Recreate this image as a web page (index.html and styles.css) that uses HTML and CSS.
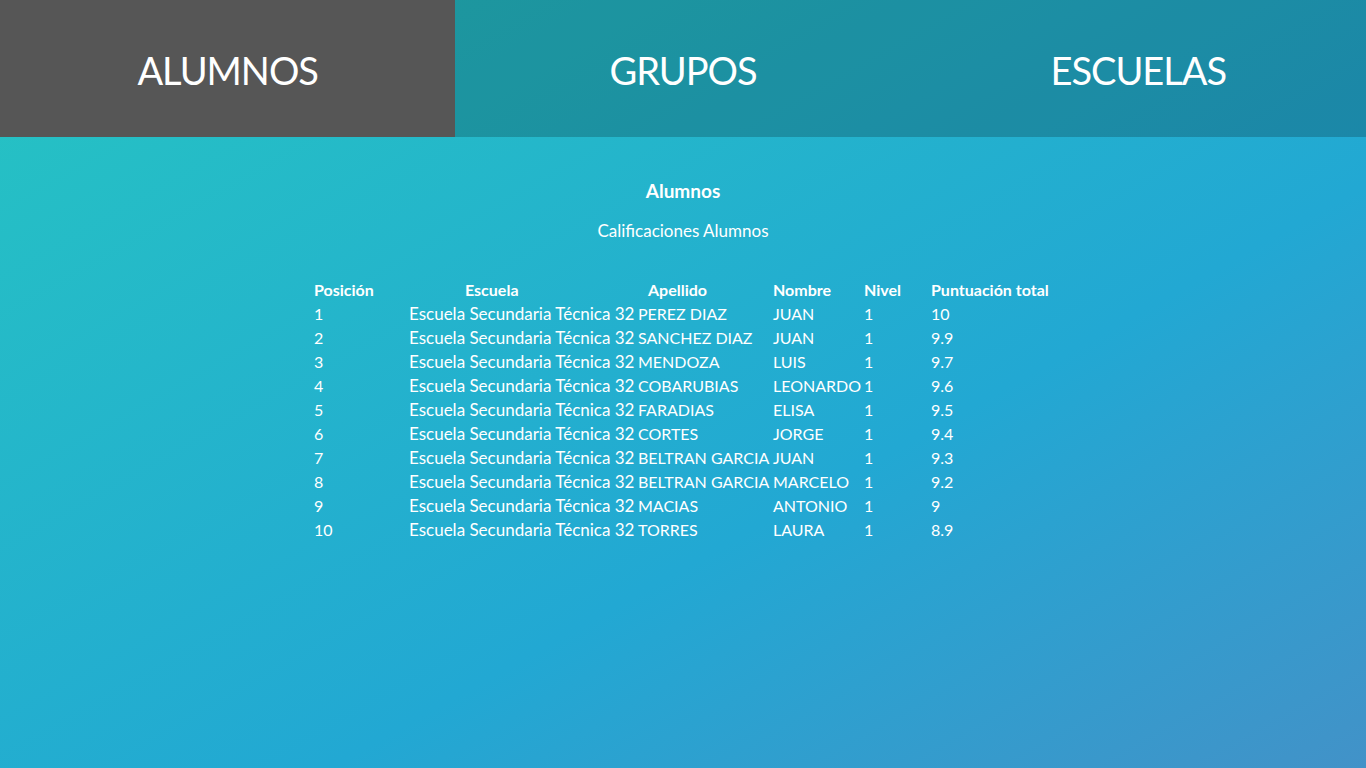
FILE: index.html
```html
<!DOCTYPE html>
<html lang="es">
<head>
<meta charset="utf-8">
<title>Alumnos</title>
<link rel="stylesheet" href="styles.css">
</head>
<body>
<nav class="tabs">
  <a class="tab active" href="#">ALUMNOS</a>
  <a class="tab" href="#">GRUPOS</a>
  <a class="tab" href="#">ESCUELAS</a>
</nav>
<main class="content">
  <h1 class="title">Alumnos</h1>
  <p class="subtitle">Calificaciones Alumnos</p>
  <table class="grades">
    <thead>
      <tr>
        <th class="c1">Posición</th>
        <th class="c2"><span class="h-escuela">Escuela</span></th>
        <th class="c3"><span class="h-apellido">Apellido</span></th>
        <th class="c4">Nombre</th>
        <th class="c5">Nivel</th>
        <th class="c6">Puntuación total</th>
      </tr>
    </thead>
    <tbody>
      <tr><td>1</td><td class="school">Escuela Secundaria Técnica 32</td><td>PEREZ DIAZ</td><td>JUAN</td><td>1</td><td>10</td></tr>
      <tr><td>2</td><td class="school">Escuela Secundaria Técnica 32</td><td>SANCHEZ DIAZ</td><td>JUAN</td><td>1</td><td>9.9</td></tr>
      <tr><td>3</td><td class="school">Escuela Secundaria Técnica 32</td><td>MENDOZA</td><td>LUIS</td><td>1</td><td>9.7</td></tr>
      <tr><td>4</td><td class="school">Escuela Secundaria Técnica 32</td><td>COBARUBIAS</td><td>LEONARDO</td><td>1</td><td>9.6</td></tr>
      <tr><td>5</td><td class="school">Escuela Secundaria Técnica 32</td><td>FARADIAS</td><td>ELISA</td><td>1</td><td>9.5</td></tr>
      <tr><td>6</td><td class="school">Escuela Secundaria Técnica 32</td><td>CORTES</td><td>JORGE</td><td>1</td><td>9.4</td></tr>
      <tr><td>7</td><td class="school">Escuela Secundaria Técnica 32</td><td>BELTRAN GARCIA</td><td>JUAN</td><td>1</td><td>9.3</td></tr>
      <tr><td>8</td><td class="school">Escuela Secundaria Técnica 32</td><td>BELTRAN GARCIA</td><td>MARCELO</td><td>1</td><td>9.2</td></tr>
      <tr><td>9</td><td class="school">Escuela Secundaria Técnica 32</td><td>MACIAS</td><td>ANTONIO</td><td>1</td><td>9</td></tr>
      <tr><td>10</td><td class="school">Escuela Secundaria Técnica 32</td><td>TORRES</td><td>LAURA</td><td>1</td><td>8.9</td></tr>
    </tbody>
  </table>
</main>
</body>
</html>
```

FILE: styles.css
```css
* { box-sizing: border-box; }
html, body {
  margin: 0;
  padding: 0;
  height: 100%;
}
body {
  min-height: 768px;
  font-family: "Lato", "Open Sans", sans-serif;
  color: #ffffff;
  background: linear-gradient(to bottom right, #26c4c2 0%, #22a8d3 62%, #4292c8 100%);
}
.tabs {
  display: flex;
  height: 137px;
  background: rgba(0, 0, 0, 0.2);
}
.tab {
  flex: 1 1 0;
  display: flex;
  align-items: center;
  justify-content: center;
  color: #ffffff;
  text-decoration: none;
  font-size: 38px;
  letter-spacing: -1px;
  font-weight: 400;
  padding-top: 2px;
}
.tab.active {
  background: #565656;
}
.content {
  display: flex;
  flex-direction: column;
  align-items: center;
  padding-top: 42px;
}
.title {
  margin: 0;
  font-size: 19px;
  font-weight: 700;
  line-height: 24px;
}
.subtitle {
  margin: 16px 0 0;
  font-size: 17px;
  line-height: 24px;
}
.grades {
  margin-top: 35px;
  border-collapse: collapse;
  table-layout: fixed;
  width: 744px;
  margin-left: 6px;
  font-size: 16px;
}
.grades th, .grades td {
  padding: 0;
  height: 24px;
  line-height: 24px;
  text-align: left;
  white-space: nowrap;
  vertical-align: middle;
}
.grades th {
  font-weight: 700;
}
.grades td.school {
  font-size: 17px;
}
.c1 { width: 95px; }
.c2 { width: 229px; }
.c3 { width: 135px; }
.c4 { width: 91px; }
.c5 { width: 67px; }
.c6 { width: 127px; }
.h-escuela { padding-left: 56px; }
.h-apellido { padding-left: 10px; }
```
